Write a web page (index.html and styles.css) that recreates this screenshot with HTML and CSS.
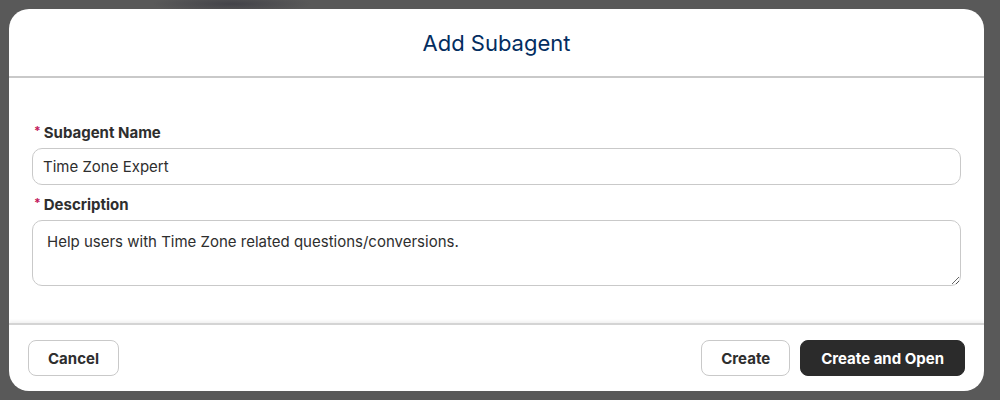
FILE: index.html
```html
<!DOCTYPE html>
<html lang="en">
<head>
<meta charset="utf-8">
<title>Add Subagent</title>
<link rel="stylesheet" href="styles.css">
</head>
<body>
<div class="modal">
  <header class="modal-header">
    <h1 class="modal-title">Add Subagent</h1>
  </header>
  <div class="modal-body">
    <label class="field-label" for="name"><abbr class="req">*</abbr>Subagent Name</label>
    <input class="field-input" id="name" type="text" value="Time Zone Expert">
    <label class="field-label second" for="desc"><abbr class="req">*</abbr>Description</label>
    <textarea class="field-textarea" id="desc">Help users with Time Zone related questions/conversions.</textarea>
  </div>
  <footer class="modal-footer">
    <button class="btn">Cancel</button>
    <div class="footer-right">
      <button class="btn">Create</button>
      <button class="btn btn-brand">Create and Open</button>
    </div>
  </footer>
</div>
</body>
</html>
```
FILE: styles.css
```css
* { box-sizing: border-box; }
html, body { height: 100%; }
body {
  margin: 0;
  padding: 9px 16px 9px 9px;
  background:
    radial-gradient(ellipse 80px 9px at 232px 4px, rgba(66,66,72,0.95), rgba(72,72,76,0) 100%),
    #595959;
  font-family: Inter, "Noto Sans", Arial, sans-serif;
  color: #2e2e2e;
}
.modal {
  height: 382px;
  background: #fff;
  border-radius: 20px;
  display: flex;
  flex-direction: column;
  overflow: hidden;
}
.modal-header {
  height: 69px;
  border-bottom: 2px solid #c9c9c9;
  display: flex;
  align-items: center;
  justify-content: center;
  flex: none;
}
.modal-title {
  margin: 0;
  font-size: 22px;
  font-weight: 400;
  color: #032d60;
  padding-top: 1px;
}
.modal-body {
  flex: 1;
  padding: 44px 23px 0 23px;
  display: flex;
  flex-direction: column;
}
.field-label {
  display: flex;
  align-items: center;
  height: 20px;
  font-size: 15px;
  font-weight: 700;
  color: #2e2e2e;
  margin-bottom: 6px;
}
.field-label.second { margin-top: 9px; }
.req {
  color: #c2185b;
  text-decoration: none;
  font-weight: 700;
  font-size: 12px;
  margin: 0 3px 0 2px;
  position: relative;
  top: -2px;
}
.field-input,
.field-textarea {
  font-family: inherit;
  font-size: 15px;
  color: #2e2e2e;
  border: 1px solid #c9c9c9;
  border-radius: 10px;
  background: #fff;
  width: 100%;
  outline: none;
}
.field-input {
  height: 37px;
  padding: 0 10px;
}
.field-textarea {
  height: 66px;
  padding: 11px 14px;
  resize: vertical;
  line-height: 20px;
}
.modal-footer {
  flex: none;
  height: 68px;
  border-top: 2px solid #d4d4d4;
  box-shadow: 0 -2px 3px rgba(0,0,0,0.06);
  padding: 0 19px;
  display: flex;
  align-items: center;
  justify-content: space-between;
}
.footer-right {
  display: flex;
  gap: 10px;
}
.btn {
  height: 36px;
  border: 1px solid #c9c9c9;
  border-radius: 8px;
  background: #fff;
  color: #2e2e2e;
  font-family: inherit;
  font-size: 15px;
  font-weight: 700;
  padding: 0 19px;
  cursor: pointer;
}
.btn-brand {
  background: #2b2b2b;
  border-color: #2b2b2b;
  color: #fff;
  padding: 0 20px;
}
```
